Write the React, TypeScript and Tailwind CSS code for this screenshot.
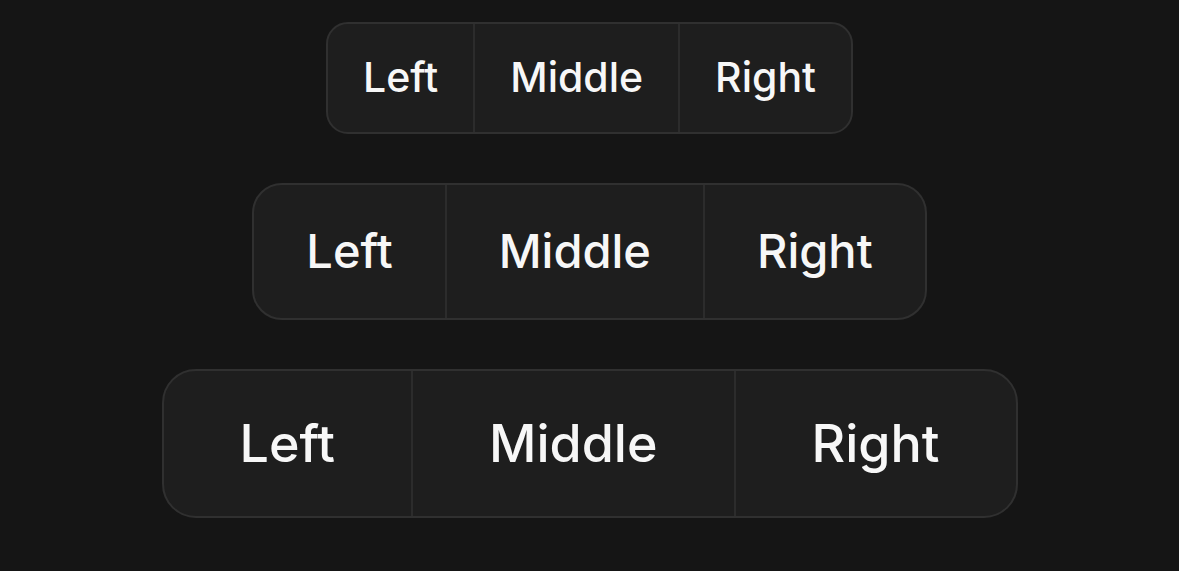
import React from "react";

const labels = ["Left", "Middle", "Right"];

function SegmentGroup({
  size,
}: {
  size: "sm" | "md" | "lg";
}) {
  const wrap = {
    sm: "h-[112px] rounded-[22px]",
    md: "h-[137px] rounded-[30px]",
    lg: "h-[149px] rounded-[34px]",
  }[size];
  const item = {
    sm: "px-[35px] text-[41px]",
    md: "px-[52px] text-[47px]",
    lg: "px-[76px] text-[52px]",
  }[size];

  return (
    <div
      className={`flex overflow-hidden border-2 border-[#303030] bg-[#1e1e1e] ${wrap}`}
    >
      {labels.map((label, i) => (
        <button
          key={label}
          className={`flex h-full items-center font-medium text-[#f7f7f7] ${item} ${
            i > 0 ? "border-l-2 border-[#2c2c2c]" : ""
          }`}
        >
          {label}
        </button>
      ))}
    </div>
  );
}

export default function App() {
  return (
    <div className="flex h-[571px] w-full flex-col items-center gap-[49px] bg-[#151515] pt-[22px] font-['Inter',sans-serif]">
      <SegmentGroup size="sm" />
      <SegmentGroup size="md" />
      <SegmentGroup size="lg" />
    </div>
  );
}
